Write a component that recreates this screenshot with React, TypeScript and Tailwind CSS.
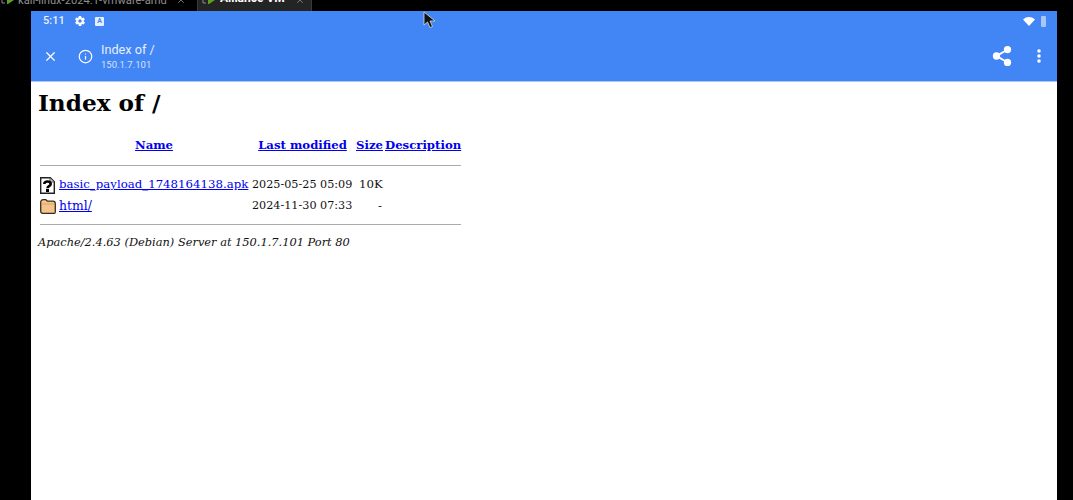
import { Info, Share2, X } from 'lucide-react';

const serif = { fontFamily: '"DejaVu Serif", serif' };

function TabIcon() {
  return (
    <svg width="14" height="8" viewBox="0 0 14 8" className="mt-[5px] shrink-0">
      <path d="M1 0v3h3" fill="none" stroke="#8a8a8a" strokeWidth="1" />
      <path d="M6 0h7L7 4H6z" fill="#5fa01e" />
    </svg>
  );
}

function GearIcon() {
  return (
    <svg width="12" height="12" viewBox="0 0 24 24" className="ml-[6px] shrink-0" fill="white">
      <path d="M19.400 13c.1-.3.1-.7.1-1s0-.7-.1-1l2.100-1.600c.2-.2.2-.4.1-.6l-2-3.500c-.1-.2-.4-.3-.6-.2l-2.500 1c-.5-.4-1.100-.7-1.700-1l-.4-2.600c0-.3-.2-.5-.5-.5h-4c-.3 0-.5.2-.5.5l-.4 2.600c-.6.3-1.200.6-1.700 1l-2.500-1c-.2-.1-.5 0-.6.2l-2 3.500c-.1.2-.1.400.1.600L4.600 11c-.1.3-.1.700-.1 1s0 .7.1 1l-2.100 1.600c-.2.2-.2.4-.1.6l2 3.500c.1.2.4.3.6.2l2.500-1c.5.4 1.100.7 1.700 1l.4 2.600c0 .3.2.5.5.5h4c.3 0 .5-.2.5-.5l.4-2.600c.6-.3 1.200-.6 1.700-1l2.500 1c.2.1.5 0 .6-.2l2-3.500c.1-.2.1-.4-.1-.6zM12 15.500a3.500 3.500 0 1 1 0-7 3.500 3.500 0 0 1 0 7z" />
    </svg>
  );
}

function FileIcon() {
  return (
    <svg width="15" height="17" viewBox="0 0 15 17" className="ml-[2px] shrink-0">
      <path d="M.7.7h9.600l4 4v11.600H.7z" fill="#fff" stroke="#222" strokeWidth="1.400" />
      <path d="M10 1v4h4" fill="#ccc" stroke="#444" strokeWidth="0.800" />
      <path d="M4.300 7c0-3.400 6.400-3.400 6.400 0 0 2.200-3.200 2-3.200 4.200" fill="none" stroke="#000" strokeWidth="2.600" />
      <rect x="6" y="12" width="3" height="3" fill="#000" />
    </svg>
  );
}

function FolderIcon() {
  return (
    <svg width="16" height="15" viewBox="0 0 16 15" className="ml-[2px] shrink-0">
      <path d="M.7 3.500C.7 1.500 1.700.7 3.200.7H5.500c1 0 1.500 1.500 2.500 1.500h5c1.500 0 2.300 1 2.300 2.500v8c0 1-.5 1.600-1 1.600H2.700c-1.500 0-2-1-2-2z" fill="#f5c48c" stroke="#3a2c1e" strokeWidth="1.300" />
      <path d="M1.500 5h13" stroke="#d69c5c" strokeWidth="0.800" />
    </svg>
  );
}

function HeaderLink({ className, children }: { className: string; children: string }) {
  return (
    <div className={className}>
      <a href="#" className="whitespace-nowrap font-bold text-[#0000ee] underline">{children}</a>
    </div>
  );
}

export default function App() {
  return (
    <div className="relative h-[500px] w-[1073px] overflow-hidden bg-black">
      <div className="flex h-[11px] items-start overflow-hidden text-[11px] leading-none" style={{ fontFamily: 'Roboto, sans-serif' }}>
        <div className="flex w-[192px] items-start gap-[3px] pl-[1px] pr-[6px] -mt-[5px] text-[#8d8d8d]">
          <TabIcon />
          <span className="truncate text-[11.200px]">kali-linux-2024.1-vmware-amd</span>
          <X className="ml-auto h-2.5 w-2.5 shrink-0" />
        </div>
        <div className="ml-[5px] flex h-[11px] w-[115px] items-start border-x border-[#3a3a3a] bg-[#242424] pl-1 pr-[6px] text-white">
          <div className="-mt-[5px] flex w-full items-start gap-1">
            <TabIcon />
            <span className="truncate text-[12px] font-bold leading-none -mt-[3px]">Alliance VM</span>
            <X className="ml-auto h-2.5 w-2.5 shrink-0 text-[#8d8d8d]" />
          </div>
        </div>
      </div>

      <div className="ml-[31px] flex h-[489px] w-[1026px] flex-col bg-white">
        <div className="h-[71px] shrink-0 border-b border-[#a9c6fa] bg-[#4285f4] text-white" style={{ fontFamily: 'Roboto, sans-serif' }}>
          <div className="flex h-[20px] items-center pl-3 pr-[11px]">
            <span className="w-[25px] text-[11px] font-medium text-[#e6efff]">5:11</span>
            <GearIcon />
            <span className="ml-[9px] flex h-[9px] w-[9px] items-center justify-center rounded-[1px] bg-[#e6efff] text-[7px] font-bold text-[#4285f4]">A</span>
            <svg width="12" height="9" viewBox="0 0 12 9" className="ml-auto" fill="white">
              <path d="M0 2.500C3.500-.8 8.500-.8 12 2.500L6 9z" />
            </svg>
            <span className="ml-[6px] h-[11px] w-[5px] rounded-[1px] bg-[#a9c6fa]" />
          </div>
          <div className="flex h-[50px] items-center pl-[12px] pr-[13px]">
            <X className="h-[15px] w-[15px]" strokeWidth={2} />
            <Info className="ml-[20px] h-[15px] w-[15px]" strokeWidth={2} />
            <div className="ml-[8px]">
              <div className="text-[12.700px] leading-[15px] text-[#e6efff]">Index of /</div>
              <div className="mt-[2px] text-[9.500px] leading-[11px] text-[#d5e3fd]">150.1.7.101</div>
            </div>
            <Share2 className="ml-auto h-[22px] w-[22px]" fill="white" strokeWidth={2} />
            <svg width="4" height="14" viewBox="0 0 4 14" className="ml-[24px] mr-[3px]" fill="white">
              <circle cx="2" cy="2" r="1.800" />
              <circle cx="2" cy="7" r="1.800" />
              <circle cx="2" cy="12" r="1.800" />
            </svg>
          </div>
        </div>

        <div className="flex-1 px-[7px] text-[11.750px] text-[#111]" style={serif}>
          <h1 className="mt-[6px] h-[30px] text-[23.200px] font-bold leading-[30px] text-black">Index of /</h1>
          <div className="mt-[18px] flex h-[20px] w-[424px] items-center text-[11.700px]">
            <HeaderLink className="w-[212px] pl-[20px] text-center">Name</HeaderLink>
            <HeaderLink className="ml-[3px] w-[99px] text-center">Last modified</HeaderLink>
            <HeaderLink className="ml-[4px] w-[27px] text-center">Size</HeaderLink>
            <HeaderLink className="ml-[2px] w-[76px] text-center">Description</HeaderLink>
          </div>
          <hr className="ml-[2px] mt-[9px] w-[421px] border-t border-[#aaaaaa]" />
          <div className="mt-[8px] flex h-[22px] w-[424px] items-center whitespace-nowrap">
            <FileIcon />
            <a href="#" className="ml-[4px] w-[193px] text-[#0000ee] underline">basic_payload_1748164138.apk</a>
            <span className="w-[100px] text-[11.200px]">2025-05-25 05:09</span>
            <span className="ml-[7px]">10K</span>
          </div>
          <div className="flex h-[21px] w-[424px] items-center whitespace-nowrap">
            <FolderIcon />
            <a href="#" className="ml-[3px] w-[193px] text-[12.400px] text-[#0000ee] underline">html/</a>
            <span className="w-[100px] text-[11.200px]">2024-11-30 07:33</span>
            <span className="ml-[26px]">-</span>
          </div>
          <hr className="ml-[2px] mt-[7px] w-[421px] border-t border-[#aaaaaa]" />
          <div className="mt-[9px] whitespace-nowrap text-[11.400px] italic">Apache/2.4.63 (Debian) Server at 150.1.7.101 Port 80</div>
        </div>
      </div>

      <svg width="14" height="18" viewBox="0 0 14 18" className="absolute left-[423px] top-[11px]">
        <path d="M1 1v13l3.500-3 2.500 5.500 2.500-1L7 10h5z" fill="#111" stroke="#ddd" strokeWidth="0.800" />
      </svg>
    </div>
  );
}
